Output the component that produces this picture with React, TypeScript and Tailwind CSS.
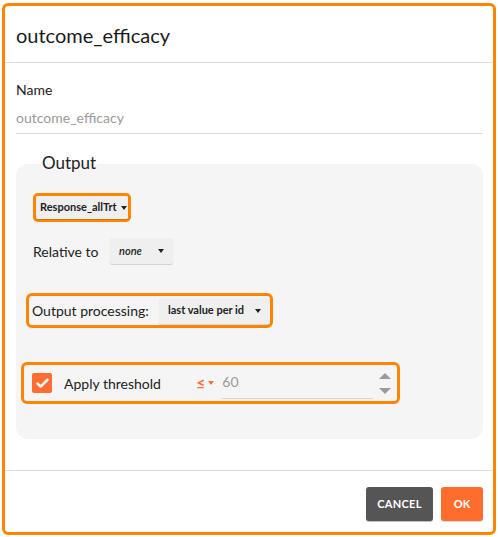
import { Check } from 'lucide-react';

const font = { fontFamily: '"Source Sans Pro", Lato, "Noto Sans", sans-serif' };

function Caret({ className = 'border-t-[#222]' }: { className?: string }) {
  return <span className={`inline-block h-0 w-0 border-x-[3.5px] border-t-[4px] border-x-transparent ${className}`} />;
}

function Dropdown({ label, className, italic }: { label: string; className: string; italic?: boolean }) {
  return (
    <div className={`flex items-center justify-between rounded-[2px] bg-[#efefef] shadow-[0_1px_1px_rgba(0,0,0,0.15)] ${className}`}>
      <span className={`text-[11px] font-bold text-[#222] ${italic ? 'italic font-semibold' : ''}`}>{label}</span>
      <Caret />
    </div>
  );
}

export default function App() {
  return (
    <div className="h-[537px] w-[498px] bg-white pl-[2px] pr-[2px] pt-[3px]" style={font}>
      <div className="flex h-[532px] w-[494px] flex-col rounded-[6px] border-[3px] border-[#ff8400] bg-white">
        <div className="flex h-[57px] items-center border-b border-[#e0e0e0] pl-[11px] pt-[2px]">
          <h1 className="text-[20px] text-[#1a1a1a]">outcome_efficacy</h1>
        </div>

        <div className="flex-1 px-[11px] pr-[10px]">
          <div className="pt-[17px] text-[14px] text-[#222] leading-[20px]">Name</div>
          <div className="mt-[8px] border-b border-[#dcdcdc] pb-[5px] text-[14px] leading-[20px] text-[#9a9a9a]">outcome_efficacy</div>

          <div className="relative mt-[30px] h-[275px] rounded-[12px] bg-[#f5f5f5] px-[17px]">
            <div className="absolute left-[26px] top-[-12px] text-[17px] leading-[22px] text-[#222]">Output</div>

            <div className="pt-[29px]">
              <div className="inline-flex rounded-[5px] border-[3px] border-[#ff8400]">
                <Dropdown label="Response_allTrt" className="h-[23px] w-[92px] gap-1 px-[4px]" />
              </div>
            </div>

            <div className="mt-[16px] flex items-center">
              <span className="w-[77px] text-[14px] text-[#222]">Relative to</span>
              <Dropdown label="none" italic className="h-[26px] w-[63px] px-[9px]" />
            </div>

            <div className="ml-[-7px] mt-[29px] inline-flex h-[35px] items-center rounded-[6px] border-[3px] border-[#ff8400] pl-[3px]">
              <span className="w-[127px] text-[14px] text-[#222]">Output processing:</span>
              <Dropdown label="last value per id" className="h-[26px] w-[111px] px-[9px]" />
            </div>

            <div className="ml-[-12px] mt-[34px] flex h-[42px] w-[379px] items-center rounded-[6px] border-[3px] border-[#ff8400] pl-[8px]">
              <span className="flex h-[20px] w-[20px] items-center justify-center rounded-[2px] bg-[#ff6d33]">
                <Check className="h-[15px] w-[15px] text-white" strokeWidth={4} />
              </span>
              <span className="ml-[12px] w-[132px] text-[14px] text-[#222]">Apply threshold</span>
              <span className="flex items-center gap-[3px]">
                <span className="text-[16px] font-bold leading-none text-[#ff6d33]">≤</span>
                <Caret className="border-t-[#ff6d33]" />
              </span>
              <div className="ml-[8px] flex h-[32px] w-[151px] items-start border-b border-[#d6d6d6] pt-[4px]">
                <span className="text-[14px] text-[#9a9a9a]">60</span>
              </div>
              <div className="ml-[6px] flex flex-col items-center gap-[9px]">
                <span className="h-0 w-0 border-x-[6px] border-b-[6px] border-x-transparent border-b-[#9b9b9b]" />
                <span className="h-0 w-0 border-x-[6px] border-t-[6px] border-x-transparent border-t-[#9b9b9b]" />
              </div>
            </div>
          </div>
        </div>

        <div className="flex h-[62px] items-start justify-end gap-[8px] border-t border-[#e0e0e0] pr-[10px] pt-[16px]">
          <button className="h-[34px] w-[67px] rounded-[3px] bg-[#555555] text-[11px] font-bold tracking-wide text-white shadow-[0_1px_0_rgba(0,0,0,0.25)]">CANCEL</button>
          <button className="h-[34px] w-[42px] rounded-[3px] bg-[#ff6d2e] text-[11px] font-bold text-white shadow-[0_1px_0_rgba(0,0,0,0.15)]">OK</button>
        </div>
      </div>
    </div>
  );
}
